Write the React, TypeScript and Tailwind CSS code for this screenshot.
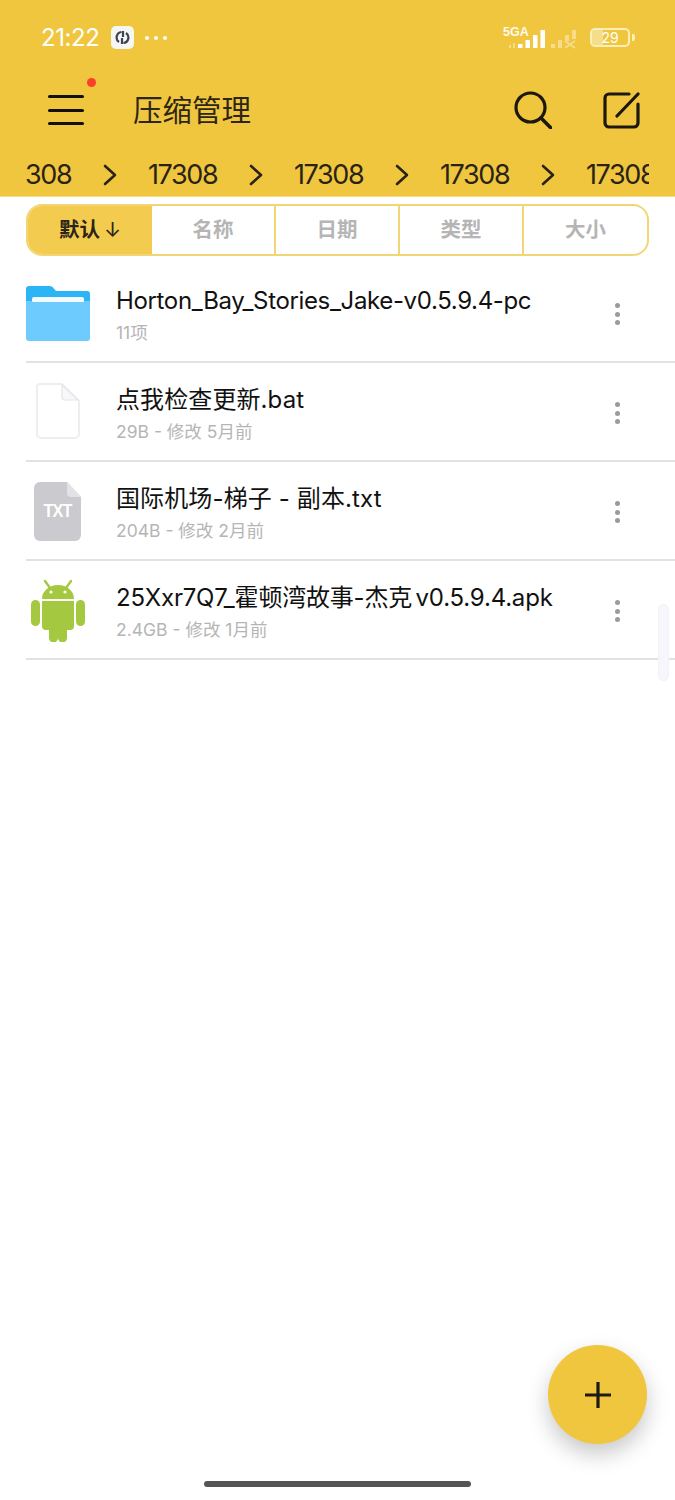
const FONT = 'font-["Inter","Noto_Sans_CJK_SC",sans-serif]';

const sortTabs = [
  { label: '默认', arrow: true, active: true, width: 'w-[124px]' },
  { label: '名称', arrow: false, active: false, width: 'w-[124px]' },
  { label: '日期', arrow: false, active: false, width: 'w-[124px]' },
  { label: '类型', arrow: false, active: false, width: 'w-[124px]' },
  { label: '大小', arrow: false, active: false, width: 'flex-1' },
];

function FolderIcon() {
  return (
    <svg width="64" height="55" viewBox="0 0 64 55">
      <path d="M0 3a3 3 0 0 1 3-3h21a4 4 0 0 1 3 1.500L30 5h31a3 3 0 0 1 3 3v12H0z" fill="#2bb5f6" />
      <rect x="6" y="11" width="52" height="14" rx="2" fill="#f4fbff" />
      <path d="M0 15h5q1 0 1.500 1h51q.5-1 1.500-1h5v37a3 3 0 0 1-3 3H3a3 3 0 0 1-3-3z" fill="#6ecbfd" />
    </svg>
  );
}

function BlankFileIcon() {
  return (
    <svg width="44" height="56" viewBox="0 0 44 56">
      <path d="M4 1h22l17 17v33a4 4 0 0 1-4 4H5a4 4 0 0 1-4-4V4a3 3 0 0 1 3-3z" fill="#fff" stroke="#eeedf1" strokeWidth="2" />
      <path d="M26 2v12a3 3 0 0 0 3 3h13z" fill="#f8f8fa" stroke="#e6e5ea" strokeWidth="1.200" />
    </svg>
  );
}

function TxtIcon() {
  return (
    <div className="relative h-[59px] w-[47px]">
      <svg width="47" height="59" viewBox="0 0 47 59" className="absolute inset-0">
        <path d="M6 0h27l14 15v38a6 6 0 0 1-6 6H6a6 6 0 0 1-6-6V6a6 6 0 0 1 6-6z" fill="#cbcacf" />
        <path d="M33 0l14 15H37a4 4 0 0 1-4-4z" fill="#e2e1e5" />
      </svg>
      <span className='absolute inset-x-0 top-[18px] scale-x-90 text-center font-["Liberation_Sans",sans-serif] text-[18px] leading-[22px] font-bold tracking-[-1px] text-white'>TXT</span>
    </div>
  );
}

function AndroidIcon() {
  return (
    <svg width="54" height="64" viewBox="0 0 54 64" fill="#a4c83f">
      <path d="M14 3l5 7M40 3l-5 7" stroke="#a4c83f" strokeWidth="2.400" strokeLinecap="round" />
      <path d="M11 21a16 14 0 0 1 32 0z" />
      <circle cx="20" cy="14" r="1.600" fill="#fff" />
      <circle cx="34" cy="14" r="1.600" fill="#fff" />
      <path d="M11 23h32v25a4 4 0 0 1-4 4h-3v8a4.500 4.500 0 0 1-9 0v-8h0v8a4.500 4.500 0 0 1-9 0v-8h-3a4 4 0 0 1-4-4z" />
      <rect x="0" y="22" width="9" height="26" rx="4.500" />
      <rect x="45" y="22" width="9" height="26" rx="4.500" />
    </svg>
  );
}

const files = [
  { name: 'Horton_Bay_Stories_Jake-v0.5.9.4-pc', meta: '11项', icon: <FolderIcon />, iconBox: 'pl-0 mt-[1px]', nameFit: 'tracking-[-0.35px]' },
  { name: '点我检查更新.bat', meta: '29B - 修改 5月前', icon: <BlankFileIcon />, iconBox: 'pl-[10px] -mt-[2px]', nameFit: 'tracking-[0.1px]' },
  { name: '国际机场-梯子 - 副本.txt', meta: '204B - 修改 2月前', icon: <TxtIcon />, iconBox: 'pl-[8px] mt-[1px]', nameFit: 'tracking-[0.12px]' },
  { name: '25Xxr7Q7_霍顿湾故事-杰克 v0.5.9.4.apk', meta: '2.4GB - 修改 1月前', icon: <AndroidIcon />, iconBox: 'pl-[5px]', nameFit: 'tracking-[-0.2px] [word-spacing:-3px]' },
];

function Breadcrumb() {
  return (
    <div className="mx-[26px] mt-[1px] flex h-[40px] items-center overflow-hidden">
      <div className="-ml-[24px] flex shrink-0 items-center">
        {[0, 1, 2, 3, 4].map((i) => (
          <div key={i} className="flex shrink-0 items-center">
            <span className="w-[68px] text-[27px] leading-[40px] tracking-[-1.400px] text-[#2a2315]">17308</span>
            {i < 4 && (
              <svg width="78" height="24" viewBox="0 0 78 24" fill="none" stroke="#2a2315" strokeWidth="2.600" strokeLinecap="round" strokeLinejoin="round">
                <path d="M35 3l10 9-10 9" />
              </svg>
            )}
          </div>
        ))}
      </div>
    </div>
  );
}

export default function App() {
  return (
    <div className={`relative flex h-[1500px] w-[675px] flex-col overflow-hidden bg-white ${FONT}`}>
      {/* header */}
      <div className="h-[197px] border-b border-[#f5dc85] bg-[#f0c63f]">
        {/* status bar */}
        <div className="flex h-[75px] items-center justify-between pl-[41px] pr-[40px]">
          <div className="flex items-center">
            <span className="text-[24px] leading-[30px] font-normal tracking-[-0.4px] text-white">21:22</span>
            <div className="ml-[11px] flex h-[23px] w-[23px] items-center justify-center rounded-[5px] bg-[#f6f6f4]">
              <svg width="15" height="15" viewBox="0 0 15 15" fill="none" stroke="#3d4352" strokeWidth="2.200">
                <path d="M6.500 2A5.500 5.500 0 0 0 4 12M8.500 13A5.500 5.500 0 0 0 11 3" />
                <path d="M8 1v6M7 8v6" />
              </svg>
            </div>
            <div className="ml-[11px] flex gap-[5px]">
              <span className="h-[4px] w-[4px] rounded-full bg-white" />
              <span className="h-[4px] w-[4px] rounded-full bg-white" />
              <span className="h-[4px] w-[4px] rounded-full bg-white" />
            </div>
          </div>
          <div className="flex items-center">
            <div className="relative h-[24px] w-[76px]">
              <span className='absolute left-0 top-0 font-["Liberation_Sans",sans-serif] text-[12.500px] leading-[13px] font-bold text-white/90'>5GA</span>
              <svg width="76" height="22" viewBox="0 0 76 22" className="absolute left-0 top-[2px]" fill="#fff">
                <rect x="6" y="17" width="2" height="3" opacity=".4" />
                <rect x="10" y="15" width="2" height="5" opacity=".4" />
                <rect x="15" y="16" width="4.500" height="4" />
                <rect x="22.500" y="12" width="4.500" height="8" />
                <rect x="30" y="7" width="4.500" height="13" />
                <rect x="37.500" y="2" width="4.500" height="18" />
                <g opacity=".4">
                  <rect x="48" y="16" width="4" height="4" />
                  <rect x="55" y="12" width="4" height="8" />
                  <rect x="62" y="7" width="4" height="6" />
                  <rect x="69" y="2" width="4" height="9" />
                  <path d="M62 13l10 7M72 13l-10 7" stroke="#fff" strokeWidth="1.800" />
                </g>
              </svg>
            </div>
            <div className="ml-[11px] flex items-center">
              <div className="relative flex h-[19px] w-[40px] items-center justify-center overflow-hidden rounded-[5px] border-2 border-[#fbeeb8]">
                <div className="absolute inset-y-0 left-0 w-[11px] bg-white/40" />
                <span className="relative text-[14px] leading-[15px] text-white">29</span>
              </div>
              <div className="ml-[2px] h-[7px] w-[3px] rounded-r-[2px] bg-[#fbeeb8]" />
            </div>
          </div>
        </div>
        {/* toolbar */}
        <div className="relative flex h-[70px] items-center pl-[48px] pr-[35px]">
          <div className="relative flex h-[30px] w-[36px] flex-col justify-between">
            <span className="h-[3px] rounded-full bg-[#12100a]" />
            <span className="h-[3px] rounded-full bg-[#12100a]" />
            <span className="h-[3px] rounded-full bg-[#12100a]" />
            <span className="absolute -right-[12px] -top-[17px] h-[9px] w-[9px] rounded-full bg-[#f8402b]" />
          </div>
          <span className="ml-[49px] text-[29.500px] leading-[40px] text-[#2e2614]">压缩管理</span>
          <div className="ml-auto flex items-center gap-[51px]">
            <svg width="38" height="38" viewBox="0 0 38 38" fill="none" stroke="#1c180e" strokeWidth="3.200" strokeLinecap="round">
              <circle cx="16.500" cy="16.500" r="14.500" />
              <path d="M27 27l10 10" strokeWidth="3.600" />
            </svg>
            <svg width="37" height="37" viewBox="0 0 37 37" fill="none" stroke="#1c180e" strokeWidth="3.200" strokeLinecap="round" strokeLinejoin="round">
              <path d="M26 2H6a4 4 0 0 0-4 4v25a4 4 0 0 0 4 4h25a4 4 0 0 0 4-4V12" />
              <path d="M35 2L14 24" />
            </svg>
          </div>
        </div>
        <div className="h-[9px]" />
        <Breadcrumb />
      </div>

      {/* sort tabs */}
      <div className="mx-[26px] mt-[7px] flex h-[52px] overflow-hidden rounded-[16px] border-2 border-[#f2d675]">
        {sortTabs.map((tab, i) => (
          <div
            key={tab.label}
            className={`flex items-center justify-center text-[20.500px] font-bold ${tab.width} ${
              tab.active ? 'bg-[#f3cb4f] text-[#2a2416]' : 'text-[#b5b5b5]'
            } ${i > 0 && i < 4 ? 'border-r-2 border-[#f2d675]' : ''}`}
          >
            {tab.label}
            {tab.arrow && <span className="ml-[4px] font-normal">↓</span>}
          </div>
        ))}
      </div>

      {/* file list */}
      <div className="mt-[8px] pl-[26px]">
        {files.map((file) => (
          <div key={file.name} className="flex h-[99px] border-b-2 border-[#e2e2e2]">
            <div className={`flex w-[90px] shrink-0 items-center ${file.iconBox}`}>{file.icon}</div>
            <div className="min-w-0 flex-1 pt-[20px]">
              <div className={`whitespace-nowrap text-[24px] leading-[34px] text-[#111] ${file.nameFit}`}>{file.name}</div>
              <div className="mt-[2px] whitespace-nowrap text-[17.500px] leading-[26px] text-[#b5b5b5]">{file.meta}</div>
            </div>
            <div className="mt-[3px] flex w-[57px] shrink-0 flex-col items-start justify-center gap-[3.500px]">
              <span className="-ml-[3px] h-[5px] w-[5px] rounded-full bg-[#9a9a9e]" />
              <span className="-ml-[3px] h-[5px] w-[5px] rounded-full bg-[#9a9a9e]" />
              <span className="-ml-[3px] h-[5px] w-[5px] rounded-full bg-[#9a9a9e]" />
            </div>
          </div>
        ))}
      </div>

      {/* scrollbar */}
      <div className="absolute left-[658px] top-[604px] h-[77px] w-[11px] rounded-full border border-[#f1f1f6] bg-[#f7f7fb]" />

      {/* add button */}
      <div className="absolute left-[548px] top-[1345px] flex h-[99px] w-[99px] items-center justify-center rounded-full bg-[#f0c63f] shadow-[0_10px_22px_rgba(0,0,0,0.22)]">
        <svg width="26" height="26" viewBox="0 0 26 26" stroke="#1d1a10" strokeWidth="3.200">
          <path d="M0 13h26M13 0v26" />
        </svg>
      </div>

      {/* home indicator */}
      <div className="absolute left-[204px] top-[1481px] h-[6px] w-[267px] rounded-full bg-[#555]" />
    </div>
  );
}
